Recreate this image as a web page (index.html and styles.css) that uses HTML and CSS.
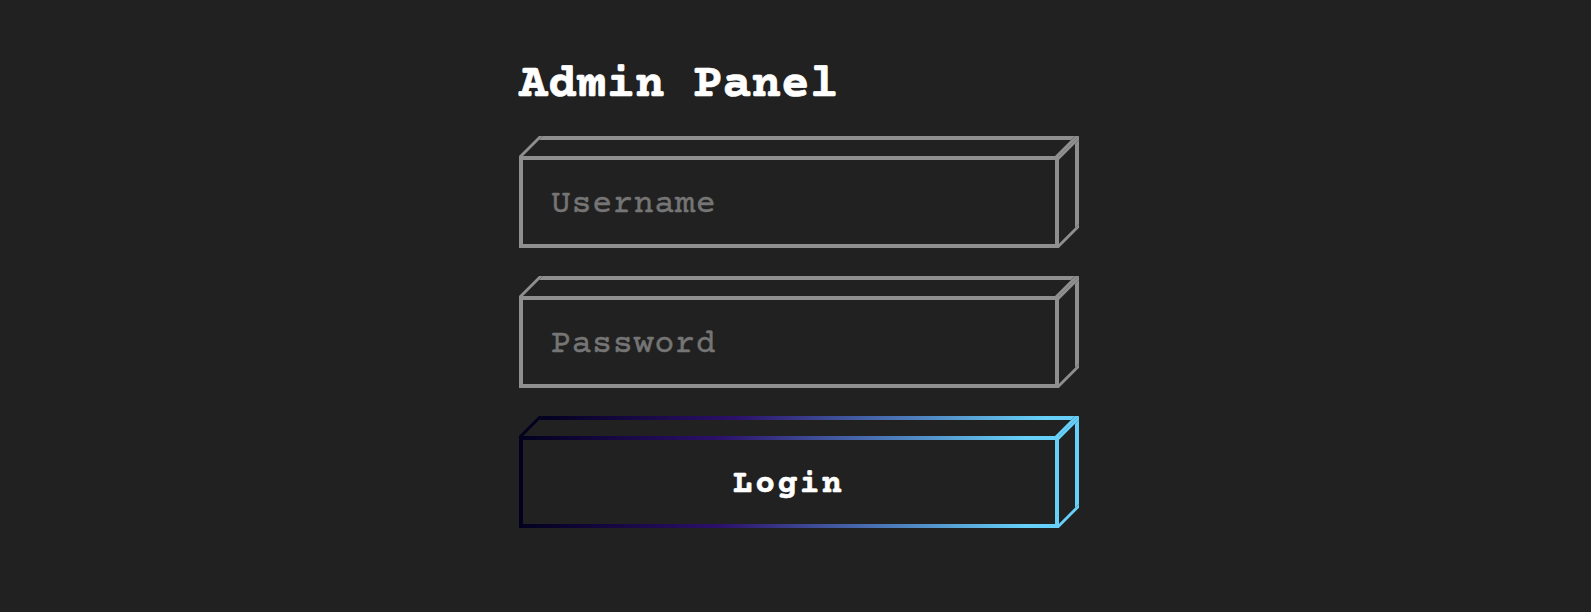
FILE: index.html
```
<!DOCTYPE html>
<html lang="en">
<head>
<meta charset="utf-8">
<title>Admin Panel</title>
<link rel="stylesheet" href="styles.css">
</head>
<body>
<form class="panel">
  <h1 class="title">Admin Panel</h1>
  <div class="box"><input class="face" type="text" placeholder="Username" aria-label="Username"></div>
  <div class="box"><input class="face" type="password" placeholder="Password" aria-label="Password"></div>
  <div class="box accent"><button class="face" type="button">Login</button></div>
</form>
</body>
</html>
```
FILE: styles.css
```
*, *::before, *::after { box-sizing: border-box; }
body {
  margin: 0;
  min-height: 100vh;
  background: #212121;
  color: #fff;
  font-family: "Courier Prime", "Liberation Mono", monospace;
}
.panel {
  width: 540px;
  margin-left: 519px;
  padding-top: 57px;
}
.title {
  margin: 0 0 43px;
  font-size: 48px;
  line-height: 56px;
  font-weight: 700;
  letter-spacing: 0.3px;
  -webkit-text-stroke: 0.7px #fff;
}
.box {
  --edge: linear-gradient(#8f8f8f, #8f8f8f);
  position: relative;
  height: 92px;
  margin-bottom: 48px;
}
.accent {
  --edge: linear-gradient(90deg, #02001e 0%, #2c1069 37%, #66d0f8 94%);
}
.face {
  display: block;
  width: 100%;
  height: 100%;
  padding: 4px 28px 0;
  border: 4px solid;
  border-image: var(--edge) 4;
  border-radius: 0;
  background: none;
  outline: none;
  color: #fff;
  font: 33px "Courier Prime", "Liberation Mono", monospace;
  letter-spacing: 0.9px;
}
.face::placeholder { color: #757575; opacity: 1; -webkit-text-stroke: 0.5px #757575; }
button.face {
  padding: 4px 9px 0 8px;
  font-weight: 700;
  letter-spacing: 2.4px;
  -webkit-text-stroke: 0.6px #fff;
}

/* Slanted top and right sides of the box */
.box::before,
.box::after {
  content: "";
  position: absolute;
  border: 4px solid;
  border-image: var(--edge) 4;
}
.box::before {
  left: 0;
  top: -20px;
  width: 540px;
  height: 20px;
  border-bottom: 0;
  transform: skewX(-45deg);
  transform-origin: 0 100%;
}
.box::after {
  left: 540px;
  top: 0;
  width: 20px;
  height: 92px;
  border-left: 0;
  transform: translateY(-0.3px) skewY(-45deg);
  transform-origin: 0 0;
}
.accent::after { border-image: linear-gradient(#66d0f8, #66d0f8) 4; }
```
